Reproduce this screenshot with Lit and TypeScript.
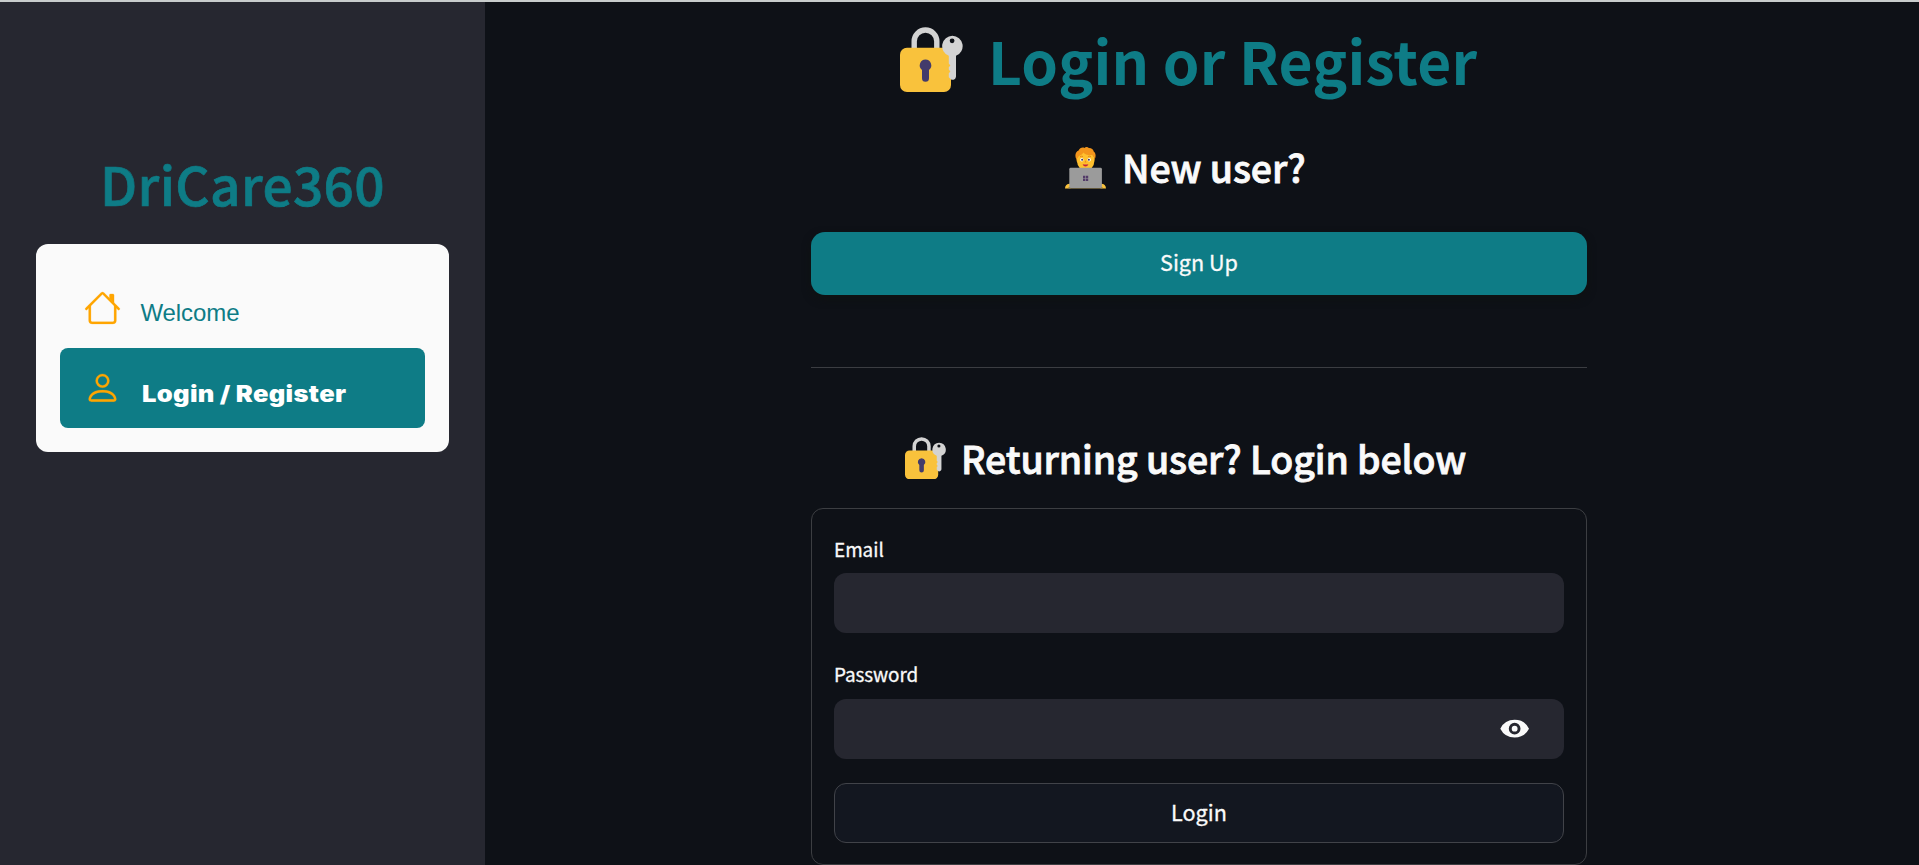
import { LitElement, html, css, svg } from "lit";
import { customElement, property } from "lit/decorators.js";

@customElement("lock-key-icon")
class LockKeyIcon extends LitElement {
  static styles = css`
    :host { display: block; }
    svg { display: block; width: 100%; height: 100%; }
  `;
  render() {
    return html`<svg viewBox="0 0 63 65" aria-hidden="true">
      <path d="M14.2 24V14.3a11.3 11.3 0 0 1 22.6 0V24" fill="none" stroke="#d3d3d3" stroke-width="5.4" />
      <rect x="0" y="20.7" width="51" height="44.3" rx="7" fill="#f9c23c" />
      <path d="M25.5 32.5a5.8 5.8 0 0 1 3.5 10.4v8.3a3.5 3.5 0 0 1-7 0v-8.3a5.8 5.8 0 0 1 3.5-10.4z" fill="#433b6b" />
      <path fill-rule="evenodd" fill="#d3d3d3" d="M52.4 8.7a10.4 10.4 0 0 1 3.6 20.1v20.7a3.4 3.4 0 0 1-5.2 2.8L48.8 50.3v-4.1l1.6-1.8-1.6-1.8v-2.4l1.6-1.8-1.6-1.8v-7.8A10.4 10.4 0 0 1 52.4 8.7zm-.3 2.7a2.4 2.4 0 1 0 0 4.8 2.4 2.4 0 0 0 0-4.8z" />
    </svg>`;
  }
}

@customElement("technologist-icon")
class TechnologistIcon extends LitElement {
  static styles = css`
    :host { display: block; }
    svg { display: block; width: 100%; height: 100%; }
  `;
  render() {
    return html`<svg viewBox="0 0 41 42" aria-hidden="true">
      <rect x="11.4" y="8.5" width="18.2" height="8" rx="4" fill="#f9a01b" />
      <rect x="12.2" y="3.5" width="17" height="19.5" rx="8" fill="#ffc02e" />
      <path d="M11.4 12.2C9.4 9 10.5 4.6 13.6 3.6 14.6 1 17.4-.2 19.4.9c1.2-1.1 3.5-1.1 4.4.2 2.4-.2 4.6 1.4 4.9 3.4 2.1 1.6 2.5 5 1 7.7-.5-2-1.4-3.4-2.7-4.1-4.6.3-7.2-.9-8.8-2.6-.8 2.8-4.3 2.6-5.3 5-.8.6-.9 1.1-1.5 1.7z" fill="#f3951c" />
      <circle cx="16.8" cy="12.7" r="1.7" fill="#fff" /><circle cx="24.2" cy="12.7" r="1.7" fill="#fff" />
      <circle cx="17.1" cy="12.7" r="1" fill="#43345c" /><circle cx="23.9" cy="12.7" r="1" fill="#43345c" />
      <path d="M15 9.8q1.5-1 3-.3M23 9.5q1.6-.7 3 .3" fill="none" stroke="#d8791c" stroke-width=".8" />
      <path d="M20.5 13l1 2.6h-2z" fill="#f08a1c" />
      <path d="M17.6 17.2q2.9.8 5.8 0-.8 2.3-2.9 2.3t-2.9-2.3z" fill="#c3203f" />
      <path d="M0 41.5c0-3 2-5 5.5-4.8v4.8zM41 41.5c0-3-2-5-5.5-4.8v4.8z" fill="#f9c23c" />
      <rect x="3.5" y="40.2" width="34" height="1.5" fill="#86754a" />
      <rect x="4.3" y="20.8" width="32.6" height="20.2" rx="1.4" fill="#9b9b9b" />
      <path d="M18 28.7h2.3V31H18zM20.9 28.7h2.3V31h-2.3zM18 31.6h2.3v2.3H18zM20.9 31.6h2.3v2.3h-2.3z" fill="#533b68" />
    </svg>`;
  }
}

const HOUSE = svg`
  <path fill-rule="evenodd" d="M2 13.5V7h1v6.5a.5.5 0 0 0 .5.5h9a.5.5 0 0 0 .5-.5V7h1v6.5a1.5 1.5 0 0 1-1.5 1.5h-9A1.5 1.5 0 0 1 2 13.5zm11-11V6l-2-2V2.5a.5.5 0 0 1 .5-.5h1a.5.5 0 0 1 .5.5z" />
  <path fill-rule="evenodd" d="M7.293 1.5a1 1 0 0 1 1.414 0l6.647 6.646a.5.5 0 0 1-.708.708L8 2.207 1.354 8.854a.5.5 0 1 1-.708-.708L7.293 1.5z" />`;
const PERSON = svg`
  <path d="M8 8a3 3 0 1 0 0-6 3 3 0 0 0 0 6zm2-3a2 2 0 1 1-4 0 2 2 0 0 1 4 0zm4 8c0 1-1 1-1 1H3s-1 0-1-1 1-4 6-4 6 3 6 4zm-1-.004c-.001-.246-.154-.986-.832-1.664C11.516 10.68 10.289 10 8 10c-2.29 0-3.516.68-4.168 1.332-.678.678-.83 1.418-.832 1.664h10z" />`;

@customElement("side-nav")
class SideNav extends LitElement {
  @property() active = "login";

  static styles = css`
    :host {
      display: block;
      box-sizing: border-box;
      background: #262730;
      padding: 148px 36px 0;
    }
    .brand {
      margin: 0;
      height: 66px;
      line-height: 66px;
      text-align: center;
      white-space: nowrap;
      font-size: 53.2px;
      font-weight: 500;
      letter-spacing: 0.35px;
      -webkit-text-stroke: 0.7px #0e7c86;
      color: #0e7c86;
    }
    .menu {
      box-sizing: border-box;
      height: 208px;
      margin: 28px 0 0;
      padding: 24px;
      border-radius: 12px;
      background: #fafafa;
      list-style: none;
    }
    .item {
      box-sizing: border-box;
      display: flex;
      height: 80px;
      padding: 21px 24px 0;
      border-radius: 8px;
      font: 24px/36px "Liberation Sans", Arial, sans-serif;
      color: #0e7c86;
    }
    .item svg { flex: none; width: 37px; height: 37.5px; fill: orange; stroke: orange; stroke-width: 0.1; }
    .label { margin: 6px 0 0 19.5px; letter-spacing: -0.1px; white-space: nowrap; }
    .active { background: #0e7c86; color: #fff; }
    .active .label {
      font: 900 22.4px/36px Inter, "Liberation Sans", sans-serif;
      margin: 7px 0 0 20.5px;
      letter-spacing: 0.3px;
      word-spacing: -0.3px;
      transform: scaleX(1.14);
      transform-origin: left;
    }
  `;
  render() {
    const items = [
      { id: "welcome", label: "Welcome", icon: HOUSE },
      { id: "login", label: "Login / Register", icon: PERSON },
    ];
    return html`
      <h1 class="brand">DriCare360</h1>
      <ul class="menu">
        ${items.map(
          (i) => html`<li class="item ${i.id === this.active ? "active" : ""}">
            <svg viewBox="0 0 16 16" aria-hidden="true">${i.icon}</svg>
            <span class="label">${i.label}</span>
          </li>`
        )}
      </ul>
    `;
  }
}

@customElement("app-root")
class AppRoot extends LitElement {
  static styles = css`
    :host {
      display: flex;
      box-sizing: border-box;
      width: 100%;
      height: 100vh;
      overflow: hidden;
      border-top: 2px solid #c8cccc;
      background: #0e1117;
      color: #fafafa;
      font-family: "Noto Sans CJK SC", "Noto Sans", sans-serif;
    }
    side-nav { flex: 0 0 485px; }
    .main { flex: 1; padding-left: 326px; }
    .column { width: 776px; }
    .title, .sub { display: flex; margin: 0; white-space: nowrap; }
    .title {
      height: 115px;
      padding: 25px 0 0 89px;
      box-sizing: border-box;
      font-size: 58.7px;
      line-height: 66px;
      font-weight: 700;
      letter-spacing: 0.2px;
      color: #0e7c86;
    }
    .title lock-key-icon { width: 63px; height: 65px; margin-right: 25px; }
    .sub {
      height: 42px;
      font-size: 37.5px;
      line-height: 42px;
      font-weight: 500;
      letter-spacing: -0.12px;
      -webkit-text-stroke: 0.8px #fafafa;
    }
    .new { margin-top: 30px; padding-left: 254px; line-height: 40px; }
    .new technologist-icon { width: 41px; height: 42px; margin-right: 16px; }
    .back { padding-left: 94px; }
    .back lock-key-icon { width: 41px; height: 42.3px; margin-right: 15px; }
    .btn {
      display: flex;
      align-items: center;
      justify-content: center;
      box-sizing: border-box;
      width: 100%;
      margin: 0;
      padding: 0 0 4px;
      border: 0;
      font: 400 21.6px/30px "Noto Sans CJK SC", "Noto Sans", sans-serif;
      -webkit-text-stroke: 0.3px #fafafa;
      color: #fafafa;
    }
    .signup {
      height: 63px;
      margin-top: 43px;
      border-radius: 14px;
      background: #0e7c86;
      box-shadow: 0 4px 8px rgba(15, 17, 16, 0.8);
    }
    .rule { height: 1px; margin: 72px 0 69px; border: 0; background: #3b3d42; }
    .form {
      box-sizing: border-box;
      height: 357px;
      margin-top: 29px;
      padding: 24px 22px 0;
      border: 1px solid #3c3e42;
      border-radius: 12px;
    }
    .field-label {
      display: block;
      height: 40px;
      font-size: 18.9px;
      line-height: 32px;
      -webkit-text-stroke: 0.3px #fafafa;
    }
    .password { line-height: 30px; letter-spacing: -0.08px; }
    .input {
      box-sizing: border-box;
      display: flex;
      align-items: center;
      justify-content: flex-end;
      height: 60px;
      padding-right: 34.3px;
      border-radius: 12px;
      background: #262730;
    }
    .gap { height: 26px; }
    .eye { width: 29.3px; height: 29.3px; fill: #fafafa; }
    .login {
      height: 60px;
      margin-top: 24px;
      padding-bottom: 2px;
      border: 1px solid #414349;
      border-radius: 12px;
      background: #131720;
    }
  `;
  render() {
    return html`
      <side-nav active="login"></side-nav>
      <main class="main">
        <div class="column">
          <h1 class="title"><lock-key-icon></lock-key-icon><span>Login or Register</span></h1>
          <h3 class="sub new"><technologist-icon></technologist-icon><span>New user?</span></h3>
          <button class="btn signup">Sign Up</button>
          <hr class="rule" />
          <h3 class="sub back"><lock-key-icon></lock-key-icon><span>Returning user? Login below</span></h3>
          <div class="form">
            <label class="field-label">Email</label>
            <div class="input"></div>
            <div class="gap"></div>
            <label class="field-label password">Password</label>
            <div class="input">
              <svg class="eye" viewBox="0 0 20 20" aria-hidden="true">
                <path d="M.2 10a11 11 0 0 1 19.6 0A11 11 0 0 1 .2 10zm9.8 4a4 4 0 1 0 0-8 4 4 0 0 0 0 8zm0-2a2 2 0 1 1 0-4 2 2 0 0 1 0 4z" />
              </svg>
            </div>
            <button class="btn login">Login</button>
          </div>
        </div>
      </main>
    `;
  }
}
